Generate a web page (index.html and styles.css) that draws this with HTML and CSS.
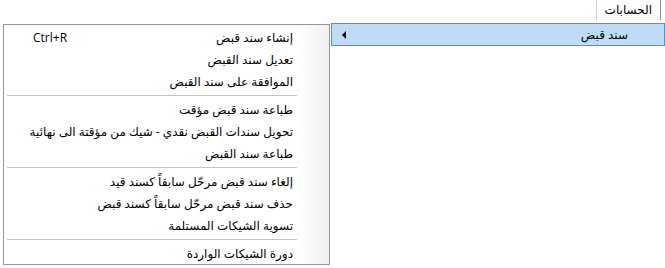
FILE: index.html
```html
<!DOCTYPE html>
<html lang="ar" dir="rtl">
<head>
  <meta charset="UTF-8" />
  <title>الحسابات</title>
  <link rel="stylesheet" href="styles.css">
</head>
<body>

  <div class="menubar">
    <div class="menubar-item">الحسابات</div>
  </div>

  <div class="menu-row">
    <div class="main-menu">
      <div class="main-item active">
        <span class="main-label">سند قبض</span>
        <span class="arrow"></span>
      </div>
    </div>

    <div class="submenu">
      <div class="item">
        <span class="label">إنشاء سند قبض</span>
        <span class="shortcut">Ctrl+R</span>
      </div>
      <div class="item"><span class="label">تعديل سند القبض</span></div>
      <div class="item"><span class="label">الموافقة على سند القبض</span></div>
      <div class="separator"></div>
      <div class="item"><span class="label">طباعة سند قبض مؤقت</span></div>
      <div class="item"><span class="label">تحويل سندات القبض نقدي - شيك من مؤقتة الى نهائية</span></div>
      <div class="item"><span class="label">طباعة سند القبض</span></div>
      <div class="separator"></div>
      <div class="item"><span class="label">إلغاء سند قبض  مرحّل سابقاً كسند قيد</span></div>
      <div class="item"><span class="label">حذف سند قبض  مرحّل سابقاً كسند قبض</span></div>
      <div class="item"><span class="label">تسوية الشيكات المستلمة</span></div>
      <div class="separator"></div>
      <div class="item"><span class="label">دورة الشيكات الواردة</span></div>
    </div>
  </div>

</body>
</html>
```

FILE: styles.css
```css
body {
  margin: 0;
  padding: 0;
  background-color: #fff;
  color: #000;
  font-family: "Open Sans", "DejaVu Sans", sans-serif;
  font-size: 12px;
}
.menubar {
  display: flex;
  height: 23px;
  padding-right: 4px;
}
.menubar-item {
  height: 20px;
  line-height: 19px;
  padding: 0 8px;
  background-color: #fff;
  border-left: 1px solid #d0d0d0;
  border-right: 1px solid #8c8c8c;
  box-sizing: border-box;
}
.menu-row {
  display: flex;
  align-items: flex-start;
  gap: 1px;
  padding-left: 3px;
}
.main-menu {
  width: 334px;
}
.main-item {
  display: flex;
  align-items: center;
  height: 23px;
  box-sizing: border-box;
  padding-right: 36px;
  padding-left: 10px;
}
.main-item.active {
  background-color: #bedcf5;
  border: 1px solid #4f90dc;
}
.arrow {
  margin-right: auto;
  width: 0;
  height: 0;
  border-top: 4px solid transparent;
  border-bottom: 4px solid transparent;
  border-right: 4px solid #000;
}
.submenu {
  width: 327px;
  margin-top: 1px;
  padding: 1px 0 0;
  border: 1px solid #979797;
  box-sizing: border-box;
  background: linear-gradient(to right, #fff, #f0f0f0) right top / 30px 100% no-repeat, #fff;
}
.item {
  display: flex;
  align-items: center;
  height: 22px;
  padding-right: 36px;
}
.shortcut {
  margin-right: auto;
  padding-left: 29px;
  direction: ltr;
}
.separator {
  height: 1px;
  margin: 3px 32px 2px 3px;
  background-color: #c4c4c4;
}
```
